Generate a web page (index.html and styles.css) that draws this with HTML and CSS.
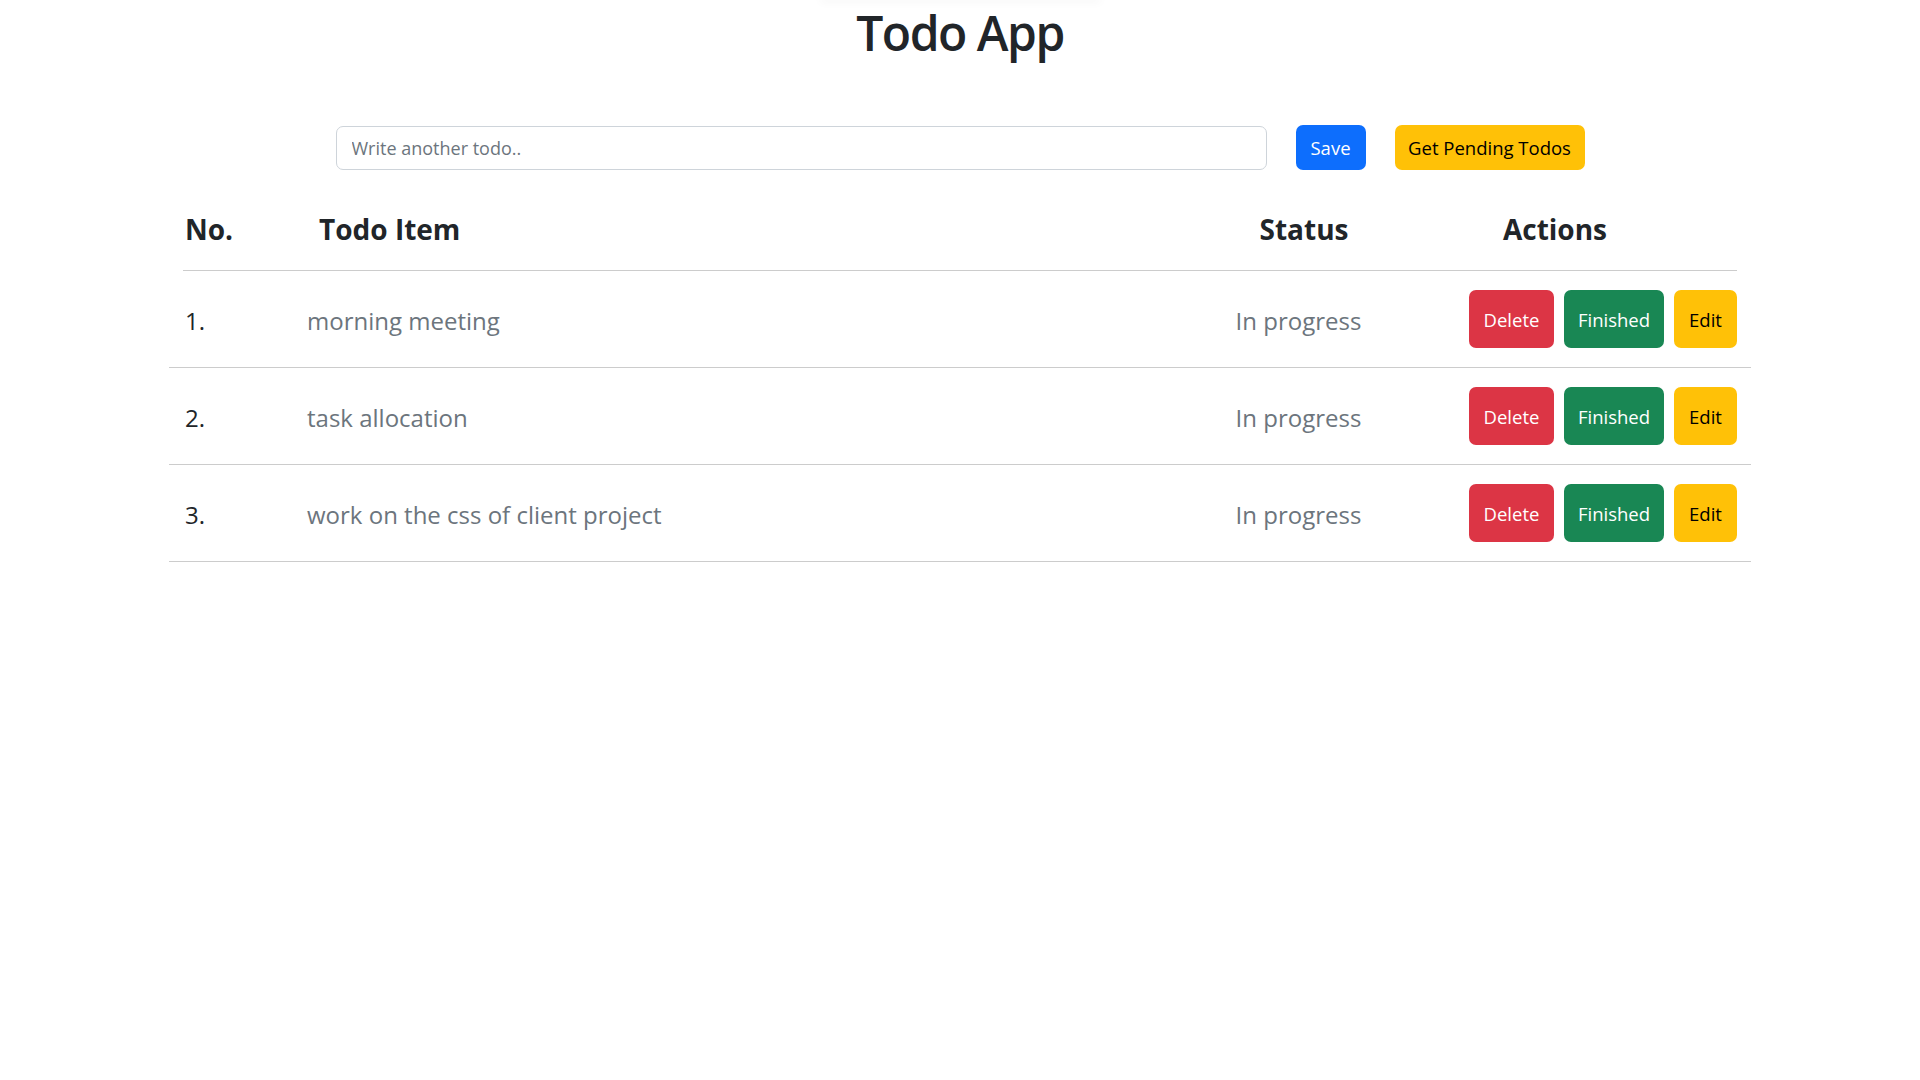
FILE: index.html
```html
<!DOCTYPE html>
<html lang="en">
<head>
<meta charset="utf-8">
<title>Todo App</title>
<link rel="stylesheet" href="styles.css">
</head>
<body>
<div class="top-shadow"></div>
<h1 class="title">Todo App</h1>
<div class="add-row">
  <input class="todo-input" type="text" placeholder="Write another todo..">
  <button class="btn btn-primary btn-save">Save</button>
  <button class="btn btn-warning btn-pending">Get Pending Todos</button>
</div>
<div class="todo-table">
  <div class="table-head">
    <div class="th">No.</div>
    <div class="th">Todo Item</div>
    <div class="th th-center">Status</div>
    <div class="th th-center">Actions</div>
  </div>
  <div class="table-row">
    <div class="cell-no">1.</div>
    <div class="cell-item">morning meeting</div>
    <div class="cell-status">In progress</div>
    <div class="cell-actions">
      <button class="btn btn-danger btn-del">Delete</button>
      <button class="btn btn-success btn-fin">Finished</button>
      <button class="btn btn-warning btn-edit">Edit</button>
    </div>
  </div>
  <div class="table-row">
    <div class="cell-no">2.</div>
    <div class="cell-item">task allocation</div>
    <div class="cell-status">In progress</div>
    <div class="cell-actions">
      <button class="btn btn-danger btn-del">Delete</button>
      <button class="btn btn-success btn-fin">Finished</button>
      <button class="btn btn-warning btn-edit">Edit</button>
    </div>
  </div>
  <div class="table-row">
    <div class="cell-no">3.</div>
    <div class="cell-item">work on the css of client project</div>
    <div class="cell-status">In progress</div>
    <div class="cell-actions">
      <button class="btn btn-danger btn-del">Delete</button>
      <button class="btn btn-success btn-fin">Finished</button>
      <button class="btn btn-warning btn-edit">Edit</button>
    </div>
  </div>
</div>
</body>
</html>
```
FILE: styles.css
```css
* { box-sizing: border-box; }

html, body {
  margin: 0;
  padding: 0;
  background: #ffffff;
}

body {
  font-family: "Open Sans", "Noto Sans", "Liberation Sans", sans-serif;
  color: #212529;
  font-size: 20px;
}

.top-shadow {
  width: 277px;
  height: 0;
  margin: 0 auto;
  box-shadow: 0 0 8px 2px rgba(0, 0, 0, 0.05);
}

.title {
  margin: 0;
  text-align: center;
  font-size: 48px;
  font-weight: 600;
  letter-spacing: -1.5px;
  line-height: 66px;
  color: #212529;
}

.add-row {
  margin-top: 59px;
  display: flex;
  justify-content: center;
  align-items: center;
  gap: 29px;
  height: 45px;
}

.todo-input {
  width: 931px;
  height: 44px;
  border: 1px solid #ced4da;
  border-radius: 7px;
  padding: 0 15px;
  font-family: inherit;
  font-size: 18px;
  color: #212529;
  outline: none;
}

.todo-input::placeholder {
  color: #6c757d;
}

.btn {
  border: none;
  border-radius: 7px;
  font-family: inherit;
  font-size: 18.5px;
  padding: 0;
  text-align: center;
  cursor: pointer;
}

.btn-primary { background: #0d6efd; color: #ffffff; }
.btn-warning { background: #ffc107; color: #000000; }
.btn-danger { background: #dc3545; color: #ffffff; }
.btn-success { background: #198754; color: #ffffff; }

.btn-save { width: 70px; height: 45px; }
.btn-pending { width: 190px; height: 45px; }

.todo-table {
  width: 1582px;
  margin: 0 auto;
}

.table-head {
  margin: 0 14px;
  display: grid;
  grid-template-columns: 134px 1fr 160px 342px;
  padding: 41px 11px 23px 2px;
  border-bottom: 1px solid #cccccc;
}

.th {
  font-size: 28px;
  font-weight: 700;
  line-height: 36px;
  color: #212529;
}

.th-center { text-align: center; }

.table-row {
  display: grid;
  grid-template-columns: 122px 1fr 161px 358px;
  align-items: center;
  height: 97px;
  padding: 3px 14px 0 16px;
  border-bottom: 1px solid #cccccc;
  font-size: 24px;
  line-height: 1.5;
}

.cell-no { color: #212529; }
.cell-item { color: #6c757d; }
.cell-status { color: #6c757d; text-align: center; }

.cell-actions {
  display: flex;
  justify-content: flex-end;
  gap: 10px;
  margin-top: -3px;
}

.cell-actions .btn { height: 58px; }
.btn-del { width: 85px; }
.btn-fin { width: 100px; }
.btn-edit { width: 63px; }
```
